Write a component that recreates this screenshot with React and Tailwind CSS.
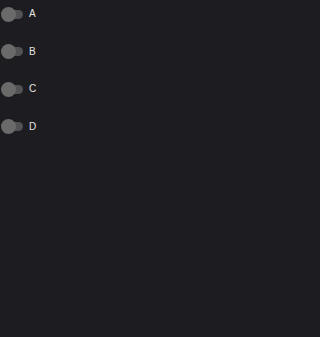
import React from 'react';

const options = ['A', 'B', 'C', 'D'];

const Toggle = () => (
  <div className="relative w-[23px] h-[14px] flex items-center">
    <div className="ml-[3px] w-[20px] h-[9px] rounded-full bg-[#525254]" />
    <div className="absolute left-[1px] top-[-0.5px] w-[15px] h-[15px] rounded-full bg-[#6a6a6a]" />
  </div>
);

const App = () => {
  return (
    <div className="min-h-screen w-full bg-[#1d1d21] pt-[7px]" style={{ fontFamily: '"Liberation Sans", Arial, sans-serif' }}>
      <div className="flex flex-col gap-[23.5px]">
        {options.map(opt => (
          <div key={opt} className="flex items-center gap-[6px] h-[14px]">
            <Toggle />
            <span className="text-[10px] leading-none text-[#e6e6e6]">{opt}</span>
          </div>
        ))}
      </div>
    </div>
  );
};

export default App;
